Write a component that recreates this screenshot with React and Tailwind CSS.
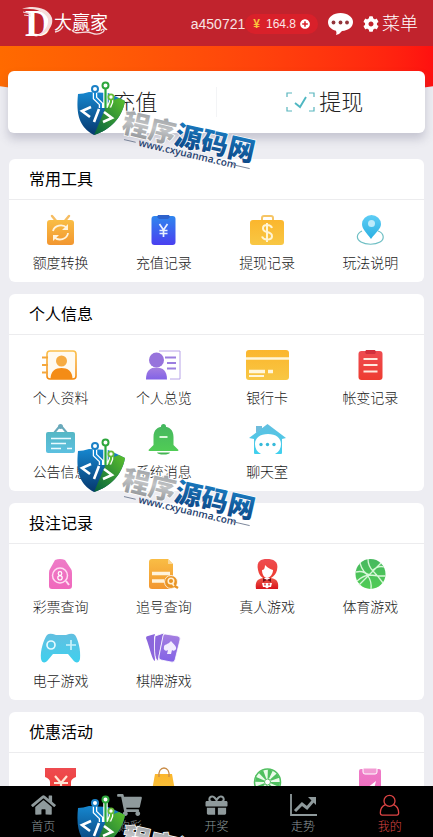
import { FaCog, FaGift, FaHome, FaPlusCircle, FaShoppingCart } from "react-icons/fa";

const gradients = [
  ["amber", "#f9bd45", "#f2962f"],
  ["gold", "#fbb62d", "#f8c744"],
  ["orange", "#fbc04c", "#f48a10"],
  ["blue", "#2f86ee", "#4a3ff0"],
  ["cyan", "#5ecdf5", "#2bb0e2"],
  ["teal", "#55b7c5", "#5cc0e0"],
  ["sky", "#62bfe0", "#3fd0ee"],
  ["purple", "#a57fe0", "#8262e6"],
  ["red", "#ee4b50", "#ee3c30"],
  ["crimson", "#ee5b4c", "#d8141c"],
  ["green", "#47b85f", "#50cc55"],
  ["pink", "#ee7cc8", "#f068bc"],
];

function Gradients() {
  return (
    <svg className="absolute h-0 w-0" aria-hidden="true">
      <defs>
        {gradients.map(([id, from, to]) => (
          <linearGradient key={id} id={id} x1="0" y1="0" x2="0" y2="1">
            <stop offset="0" stopColor={from} />
            <stop offset="1" stopColor={to} />
          </linearGradient>
        ))}
        <linearGradient id="shield-blue" x1="0" y1="0" x2="0" y2="1">
          <stop offset="0" stopColor="#1687cf" />
          <stop offset="1" stopColor="#06386e" />
        </linearGradient>
        <linearGradient id="shield-green" x1="1" y1="0" x2="0" y2="1">
          <stop offset="0" stopColor="#5cc02c" />
          <stop offset="1" stopColor="#04603f" />
        </linearGradient>
        <linearGradient id="silver" x1="0" y1="0" x2="0" y2="1">
          <stop offset="0" stopColor="#8b8f93" />
          <stop offset="0.5" stopColor="#c2c4c6" />
          <stop offset="1" stopColor="#85898d" />
        </linearGradient>
        <linearGradient id="brand-blue" x1="0" y1="0" x2="0" y2="1">
          <stop offset="0" stopColor="#1c86cc" />
          <stop offset="1" stopColor="#0b3f7e" />
        </linearGradient>
      </defs>
    </svg>
  );
}

const art = {
  transfer: (
    <>
      <path d="M14 1l5 6M31 1l-5 6" stroke="#f6bd62" strokeWidth="2.5" strokeLinecap="round" />
      <rect x="9" y="5" width="27" height="25" rx="3" fill="url(#amber)" />
      <path d="M15 16a8 7 0 0 1 14-3M30 18a8 7 0 0 1-14 4" fill="none" stroke="#fff3dc" strokeWidth="1.8" />
      <path d="M30 9v6h-6zM15 26v-6h6z" fill="#fff3dc" />
    </>
  ),
  recharge: (
    <>
      <rect x="10.500" y="1" width="24" height="29" rx="3" fill="url(#blue)" />
      <path d="M17 0h11l1 2-2 2h-9l-2-2z" fill="#2e62cc" />
      <path d="M18.500 9l4 6 4-6M22.500 15v7M18.500 15.500h8M18.500 18.500h8" fill="none" stroke="#e9f1ff" strokeWidth="1.700" />
    </>
  ),
  briefcase: (
    <>
      <path d="M17 6V3q0-2 2-2h7q2 0 2 2v3" fill="none" stroke="#f6c565" strokeWidth="2" />
      <rect x="5" y="5" width="34" height="25" rx="3" fill="url(#gold)" />
      <path d="M27 13q-1-3-5-3-4 0-4 3.200 0 3 4 3.800 5 1 5 4.200 0 3.300-5 3.300-4 0-5-3M22 8v19" fill="none" stroke="#fff4d4" strokeWidth="2" />
    </>
  ),
  pin: (
    <>
      <path d="M14 16c-6 3-6 8-1 11 5 3 14 3 19 0 5-3 4-9-2-11" fill="none" stroke="#6fbfc4" strokeWidth="1.200" />
      <path d="M23 24C18 17 14 14 14 9a9.500 9 0 0 1 19 0c0 5-5 8-10 15z" fill="url(#cyan)" />
      <circle cx="23.500" cy="8.500" r="3.500" fill="#bcebfb" />
    </>
  ),
  contact: (
    <>
      <rect x="9" y="1" width="29" height="28" rx="3" fill="#fffaf0" stroke="url(#orange)" strokeWidth="1.600" />
      <path d="M4 7.500h6M4 15h6M4 22.500h6" stroke="#f4a73c" strokeWidth="1.800" />
      <circle cx="23.500" cy="11" r="5.500" fill="#f6ab42" />
      <path d="M12.500 29c0-8 5-11 11-11s11 3 11 11z" fill="#f48c16" />
    </>
  ),
  overview: (
    <>
      <path d="M18 1h21v28h-10" fill="none" stroke="#b8a4e8" strokeWidth="1" />
      <path d="M24 7.500h11M26 13h9M26 18.500h9" stroke="#9c7fe0" strokeWidth="2" />
      <circle cx="15.500" cy="10" r="7.500" fill="#9773dc" />
      <path d="M5 29.500c0-9 4-12 10.500-12S26 21 26 29.500z" fill="url(#purple)" />
    </>
  ),
  bank: (
    <>
      <rect x="1" y="0" width="43" height="30" rx="3" fill="url(#gold)" />
      <path d="M1 8.500h43" stroke="#fff6da" strokeWidth="2.500" />
      <path d="M4 21.500h16M23 21.500h5" stroke="#fff6da" strokeWidth="3.500" />
      <path d="M4 26h15" stroke="#fff6da" strokeWidth="2" />
    </>
  ),
  clipboard: (
    <>
      <rect x="10.500" y="1" width="24" height="29" rx="3" fill="url(#red)" />
      <path d="M18 0h9l1 2-1 2h-9l-1-2z" fill="#d2303c" />
      <path d="M15.500 9h14M15.500 15h14M15.500 21.500h14" stroke="#ffe9dd" strokeWidth="1.900" />
    </>
  ),
  notice: (
    <>
      <path d="M16 9l5-6M29 9l-5-6" stroke="#69a9bb" strokeWidth="2" />
      <circle cx="22.500" cy="2.500" r="2.500" fill="#69a9bb" />
      <rect x="8" y="8" width="29" height="21" rx="2" fill="url(#teal)" />
      <path d="M13 14.500h20M13 19.500h15M13 24.500h10M29 24.500h5" stroke="#eafaff" strokeWidth="1.600" />
    </>
  ),
  bell: (
    <>
      <circle cx="22.500" cy="2.500" r="2.500" fill="#43b85e" />
      <path d="M12.500 21v-8c0-7 4-10.500 10-10.500s10 3.500 10 10.500v8l5 5q0 1-1 1h-28q-1 0-1-1z" fill="url(#green)" />
      <path d="M16 28.500h13q-1 2-6.500 2T16 28.500z" fill="#44b553" />
      <path d="M18.500 13h8" stroke="#d9f8da" strokeWidth="2" />
    </>
  ),
  house: (
    <>
      <path d="M11 9V2h6v3z" fill="#70bcdb" />
      <path d="M4 14L22.500 0 41 14l-4 1v14q0 1-1 1h-6q6-3 6-10c0-6-5-10-13-10S10 14 10 20q0 7 6 10h-6q-1 0-1-1V15z" fill="url(#sky)" />
      <circle cx="16" cy="20.500" r="1.700" fill="#36bada" />
      <circle cx="22.500" cy="20.500" r="1.700" fill="#36bada" />
      <circle cx="29" cy="20.500" r="1.700" fill="#36bada" />
    </>
  ),
  ticket: (
    <>
      <path d="M17 1q5-2 10 0l6 9q1 1 1 4v13q0 3-3 3H14q-3 0-3-3V14q0-3 1-4z" fill="url(#pink)" />
      <circle cx="22" cy="16.500" r="7.500" fill="none" stroke="#ffdcf2" strokeWidth="1.500" />
      <path d="M28 22l3 4" stroke="#ffdcf2" strokeWidth="2" />
      <circle cx="22" cy="14.500" r="1.800" fill="none" stroke="#fff" strokeWidth="1.200" />
      <circle cx="22" cy="18.800" r="2.200" fill="none" stroke="#fff" strokeWidth="1.200" />
    </>
  ),
  search: (
    <>
      <path d="M11 0h16l5 5v22q0 3-3 3H11q-3 0-3-3V3q0-3 3-3z" fill="url(#amber)" />
      <path d="M27 0v5h5z" fill="#fbd796" />
      <path d="M11 14.500h18M11 22h12" stroke="#fff3dc" strokeWidth="3.500" />
      <circle cx="30" cy="23" r="6.500" fill="#e99425" stroke="#fff" strokeWidth="0.800" />
      <circle cx="30" cy="22" r="2.800" fill="none" stroke="#fff0d5" strokeWidth="1.500" />
      <path d="M32 26l5 3" stroke="#e99425" strokeWidth="2.500" />
      <path d="M31 24l2 3" stroke="#fff0d5" strokeWidth="1.500" />
    </>
  ),
  dealer: (
    <>
      <path d="M13 11C11 2 16 0 22 0s12 2 10 11c-1 4-3 6-6 8h-8c-3-2-4-4-5-8z" fill="url(#red)" />
      <path d="M17 11c2 0 3-2 3-5 3 3 5 4 8 5 0 4-3 8-6 8s-5-4-5-8z" fill="#fff" />
      <path d="M11 30c-1-7 1-10 7-11l4 2 4-2c6 1 8 4 7 11z" fill="url(#crimson)" />
      <path d="M18 19l4 2 4-2v4l-4-2-4 2z" fill="#7a1118" />
      <path d="M17 24h10l-1 4h-2l-2 1.500-2-1.500h-2z" fill="#fff" />
      <path d="M20 24.500v2M24 24.500v2" stroke="#d8242a" strokeWidth="1.400" />
    </>
  ),
  ball: (
    <>
      <circle cx="22.500" cy="15" r="15" fill="url(#green)" />
      <path d="M33 4L11 26M12 4q3 11 10 12t15 1M20 0q0 7 5 12t10 12M8 13q8-2 12 4t3 13M24 12q6-6 12-4M22 16q-6 0-13 6" fill="none" stroke="#d7f7d8" strokeWidth="1.300" />
    </>
  ),
  gamepad: (
    <>
      <path d="M9 2q2-2 6-1l3 1h10l3-1q4-1 6 1c3 4 6 15 5 24-1 5-5 4-7 1l-5-6H15l-5 6c-2 3-6 4-7-1C2 17 6 6 9 2z" fill="url(#sky)" />
      <circle cx="13" cy="12" r="4" fill="none" stroke="#e4faff" strokeWidth="1.700" />
      <path d="M33 7v10M28 12h10" stroke="#c9f2fb" strokeWidth="1.700" />
    </>
  ),
  cards: (
    <>
      <path d="M5 5q0-2 2-2l7-2-1 4 1 23c-3-1-5-13-9-23z" fill="#8b66dc" />
      <path d="M14 3l9-3-6 28c-4-1-4-15-3-25z" fill="#8d68dd" stroke="#fff" strokeWidth="0.800" />
      <path d="M24 1l13 2q3 1 2 4l-5 20q-1 3-4 2l-10-2q-3-1-2-4l4-20q0-2 2-2z" fill="url(#purple)" stroke="#fff" strokeWidth="0.800" />
      <path d="M30 8c2 3 6 5 5 8-1 2-3 2-4 1l-1 4h-4l1-4c-2 2-5 0-4-3 0-3 4-2 7-6z" fill="#f2ecff" />
    </>
  ),
  coupon: (
    <>
      <path d="M7 0h31v9q-5 2-5 5v16H12V14q0-3-5-5z" fill="url(#red)" />
      <path d="M17 8l6 7 6-7M23 15v11M16 15h14M16 20h14" fill="none" stroke="#ffe5d5" strokeWidth="2.200" />
    </>
  ),
  bag: (
    <>
      <path d="M14 6h17l4 22q0 2-2 2H12q-2 0-2-2z" fill="url(#gold)" />
      <path d="M18 9c-2-12 12-12 10 0" fill="none" stroke="#c98c48" strokeWidth="1.300" />
    </>
  ),
  wheel: (
    <>
      <circle cx="22.500" cy="14" r="13" fill="#eafbea" stroke="#51bf60" strokeWidth="1.500" />
      <circle cx="22.500" cy="14" r="8" fill="none" stroke="#50c060" strokeWidth="9" strokeDasharray="3.200 3.083" />
      <circle cx="22.500" cy="14" r="3" fill="#fff" stroke="#50b960" strokeWidth="1" />
    </>
  ),
  signup: (
    <>
      <rect x="11" y="1" width="22" height="29" rx="2" fill="url(#pink)" />
      <path d="M15 0h14v4q0 2-2 2H17q-2 0-2-2z" fill="#f29bd3" stroke="#fff" strokeWidth="1" />
      <path d="M19 20l9-7-3 12z" fill="#fff" />
    </>
  ),
};

const sections = [
  {
    title: "常用工具",
    items: [
      ["transfer", "额度转换"],
      ["recharge", "充值记录"],
      ["briefcase", "提现记录"],
      ["pin", "玩法说明"],
    ],
  },
  {
    title: "个人信息",
    items: [
      ["contact", "个人资料"],
      ["overview", "个人总览"],
      ["bank", "银行卡"],
      ["clipboard", "帐变记录"],
      ["notice", "公告信息"],
      ["bell", "系统消息"],
      ["house", "聊天室"],
    ],
  },
  {
    title: "投注记录",
    items: [
      ["ticket", "彩票查询"],
      ["search", "追号查询"],
      ["dealer", "真人游戏"],
      ["ball", "体育游戏"],
      ["gamepad", "电子游戏"],
      ["cards", "棋牌游戏"],
    ],
  },
  {
    title: "优惠活动",
    items: [["coupon"], ["bag"], ["wheel"], ["signup"]],
  },
];

function Logo() {
  return (
    <svg viewBox="0 0 88 34" className="h-[34px] w-[88px] overflow-visible" role="img" aria-label="大赢家">
      <text x="3" y="30" fontFamily="Liberation Serif, serif" fontWeight="700" fontSize="37" fill="#fff">D</text>
      <path d="M0 3c10-4 26-2 30 9 2 9-6 17-18 19 9-4 15-10 14-18C23 5 12 2 0 3z" fill="#f6dcdc" />
      <path d="M1 6l8 2M2 9l7 1" stroke="#f6dcdc" strokeWidth="1" />
      <text x="32" y="23" fontFamily="'Noto Sans CJK SC', sans-serif" fontWeight="400" fontSize="18" fill="#fff">大赢家</text>
      <path d="M33 26c4-1 7-3 8-6M50 24c2 5 10 2 15 2s9 5 16 0c3-3-1-4-2-1" fill="none" stroke="#f4dada" strokeWidth="1.300" />
    </svg>
  );
}

function Header() {
  return (
    <header className="flex h-[46px] shrink-0 items-center justify-between bg-[#c1232d] pr-[15px] pl-[22px] text-white">
      <a href="#home"><Logo /></a>
      <div className="flex items-center pt-0.5">
        <span className="text-sm text-[#f8e4e4]">a450721</span>
        <button className="flex h-5 items-center rounded-full bg-[#d9202a] pr-2 pl-2 text-xs">
          <span className="mr-1.5 font-bold text-[#fbc23c]">¥</span>
          <span className="text-[#fbe6e6]">164.8</span>
          <FaPlusCircle className="ml-1 size-2.5" />
        </button>
        <button className="ml-2.5" aria-label="消息">
          <svg viewBox="0 0 25 22" className="h-[22px] w-[25px]">
            <path d="M12.500 0C5.500 0 0 4 0 9c0 4.500 3 7.500 8 8.700Q9 20 8 22q4-1 6-4c6.500-.5 11-4 11-9S19.500 0 12.500 0z" fill="#fff" />
            <circle cx="5.500" cy="9.500" r="1.900" fill="#93343a" />
            <circle cx="12.500" cy="9.500" r="1.900" fill="#93343a" />
            <circle cx="19" cy="9.500" r="1.900" fill="#93343a" />
          </svg>
        </button>
        <button className="ml-2.5 flex items-center gap-[3px] text-lg font-light">
          <FaCog className="size-4" />
          菜单
        </button>
      </div>
    </header>
  );
}

function Wallet() {
  return (
    <div className="relative mx-2 -mt-[29px] grid h-[62px] grid-cols-2 items-center rounded-md bg-white text-[22px] font-light text-[#222] shadow-[0_6px_10px_rgba(80,80,110,0.25)]">
      <button className="flex h-[30px] items-center justify-center gap-1.5 border-r border-gray-100 pl-3">
        <svg viewBox="0 0 29 22" className="h-[22px] w-[29px]" fill="none" stroke="#e68a92" strokeWidth="1.500">
          <circle cx="16" cy="11" r="9" />
          <path d="M12 6l4 5 4-5M16 11v6M12 12h8" />
        </svg>
        充值
      </button>
      <button className="flex h-[30px] items-center justify-center gap-1 pl-2">
        <svg viewBox="0 0 29 20" className="h-5 w-[29px]" fill="none" stroke="#58b5bd" strokeWidth="1.200">
          <path d="M1 5V1h5M23 1h5v4M28 15v4h-5M6 19H1v-4" />
          <path d="M9 11l5 4 6-10" stroke="#4fb7c2" strokeWidth="1.900" />
        </svg>
        提现
      </button>
    </div>
  );
}

function Section({ title, items }) {
  return (
    <section className="rounded-md bg-white">
      <h2 className="flex h-[41px] items-center border-b border-[#ececee] pt-0.5 pl-5 text-base font-normal text-black">{title}</h2>
      <div className="grid grid-cols-4 gap-y-4 pt-[15px] pr-0.5 pb-[9px]">
        {items.map(([icon, label]) => (
          <a key={icon} href={"#" + icon} className="flex flex-col items-center gap-2 text-sm font-light text-[#1a1a1a]">
            <svg viewBox="0 0 45 30" className="h-[30px] w-[45px] overflow-visible" fill="none" aria-hidden="true">{art[icon]}</svg>
            {label}
          </a>
        ))}
      </div>
    </section>
  );
}

function UserIcon({ className }) {
  return (
    <svg viewBox="0 0 22 24" className={className} fill="none" stroke="currentColor" strokeWidth="1.400">
      <circle cx="11" cy="7.500" r="6" />
      <path d="M6.500 11.500C3 13 1 17 1 20.500Q1 23 3 23h16q2 0 2-2.500c0-3.500-2-7.500-5.500-9" />
    </svg>
  );
}

function TrendIcon({ className }) {
  return (
    <svg viewBox="0 0 27 22" className={className} fill="none" stroke="currentColor">
      <path d="M1 0v21h26" strokeWidth="1.800" />
      <path d="M5 17l7-7 5 4 6-7" strokeWidth="3" />
      <path d="M18 3h8v8z" fill="currentColor" stroke="none" />
    </svg>
  );
}

const tabs = [
  [FaHome, "首页"],
  [FaShoppingCart, "购彩"],
  [FaGift, "开奖"],
  [TrendIcon, "走势"],
  [UserIcon, "我的"],
];

function TabBar() {
  return (
    <nav className="grid h-[51px] shrink-0 grid-cols-5 bg-black">
      {tabs.map(([Icon, label]) => (
        <a
          key={label}
          href={"#" + label}
          className={"flex flex-col items-center gap-[3px] pt-2 text-xs font-light " + (label === "我的" ? "text-[#dc4444]" : "text-[#8f9a9c]")}
        >
          <Icon className="h-[22px] w-[27px]" />
          {label}
        </a>
      ))}
    </nav>
  );
}

function Watermark() {
  return (
    <svg viewBox="0 0 186 90" className="h-[90px] w-[186px] overflow-visible">
      <path d="M14 12Q8 14 3 14c-2 20 1 33 16 41 16-5 28-17 31-34l-8-4-9-4z" fill="url(#shield-blue)" />
      <path d="M33 22L19 55c16-5 28-17 31-34l-6-3z" fill="url(#shield-green)" />
      <path d="M20 11v7l6 6v4M30.500 6v22M36 18v4l-2 5" fill="none" stroke="#fff" strokeWidth="4.500" />
      <path d="M20 11v7l6 6v4" fill="none" stroke="#1689d4" strokeWidth="2" />
      <path d="M30.500 6v22" stroke="#27a83f" strokeWidth="2.200" />
      <path d="M36 18v4l-2 5" fill="none" stroke="#55bd33" strokeWidth="2" />
      <circle cx="20" cy="9" r="3" fill="#fff" stroke="#1a80c6" strokeWidth="2" />
      <circle cx="30.500" cy="5.500" r="3" fill="#fff" stroke="#2da63c" strokeWidth="2" />
      <circle cx="36" cy="17" r="2.600" fill="#fff" stroke="#65bd36" strokeWidth="1.800" />
      <path d="M16 27L7 31l8 6M24 29l-5 13M29 32l8 6-9 4" fill="none" stroke="#fff" strokeWidth="2.600" />
      <g transform="rotate(13 48 46)">
        <text x="47" y="52" fontFamily="'Noto Sans CJK SC', sans-serif" fontSize="27" fontWeight="900" stroke="#fff" strokeWidth="1.500" paintOrder="stroke">
          <tspan fill="url(#silver)">程序</tspan>
          <tspan fill="url(#brand-blue)">源码网</tspan>
        </text>
        <text x="67" y="62" fontFamily="'Open Sans', sans-serif" fontSize="10" fontWeight="600" fill="#24406e">www.cxyuanma.com</text>
        <path d="M52 59h12M163 59h18" stroke="#68748c" strokeWidth="0.800" />
      </g>
    </svg>
  );
}

export default function App() {
  return (
    <div className="relative flex h-screen flex-col overflow-hidden bg-[#ededf2] font-['Liberation_Sans','Noto_Sans_CJK_SC',sans-serif]">
      <Gradients />
      <Header />
      <main className="min-h-0 flex-1 overflow-y-auto [scrollbar-width:none]">
        <div className="h-[54px] bg-linear-to-r from-[#ff6a00] to-[#ff1010] [clip-path:ellipse(75%_100%_at_50%_0)]" />
        <Wallet />
        <div className="mt-[26px] flex flex-col gap-3 px-[9px] pb-3">
          {sections.map((section) => (
            <Section key={section.title} {...section} />
          ))}
        </div>
      </main>
      <TabBar />
      <div className="pointer-events-none absolute top-20 left-[75px] flex flex-col gap-[267px]" aria-hidden="true">
        <Watermark />
        <Watermark />
        <Watermark />
      </div>
    </div>
  );
}
